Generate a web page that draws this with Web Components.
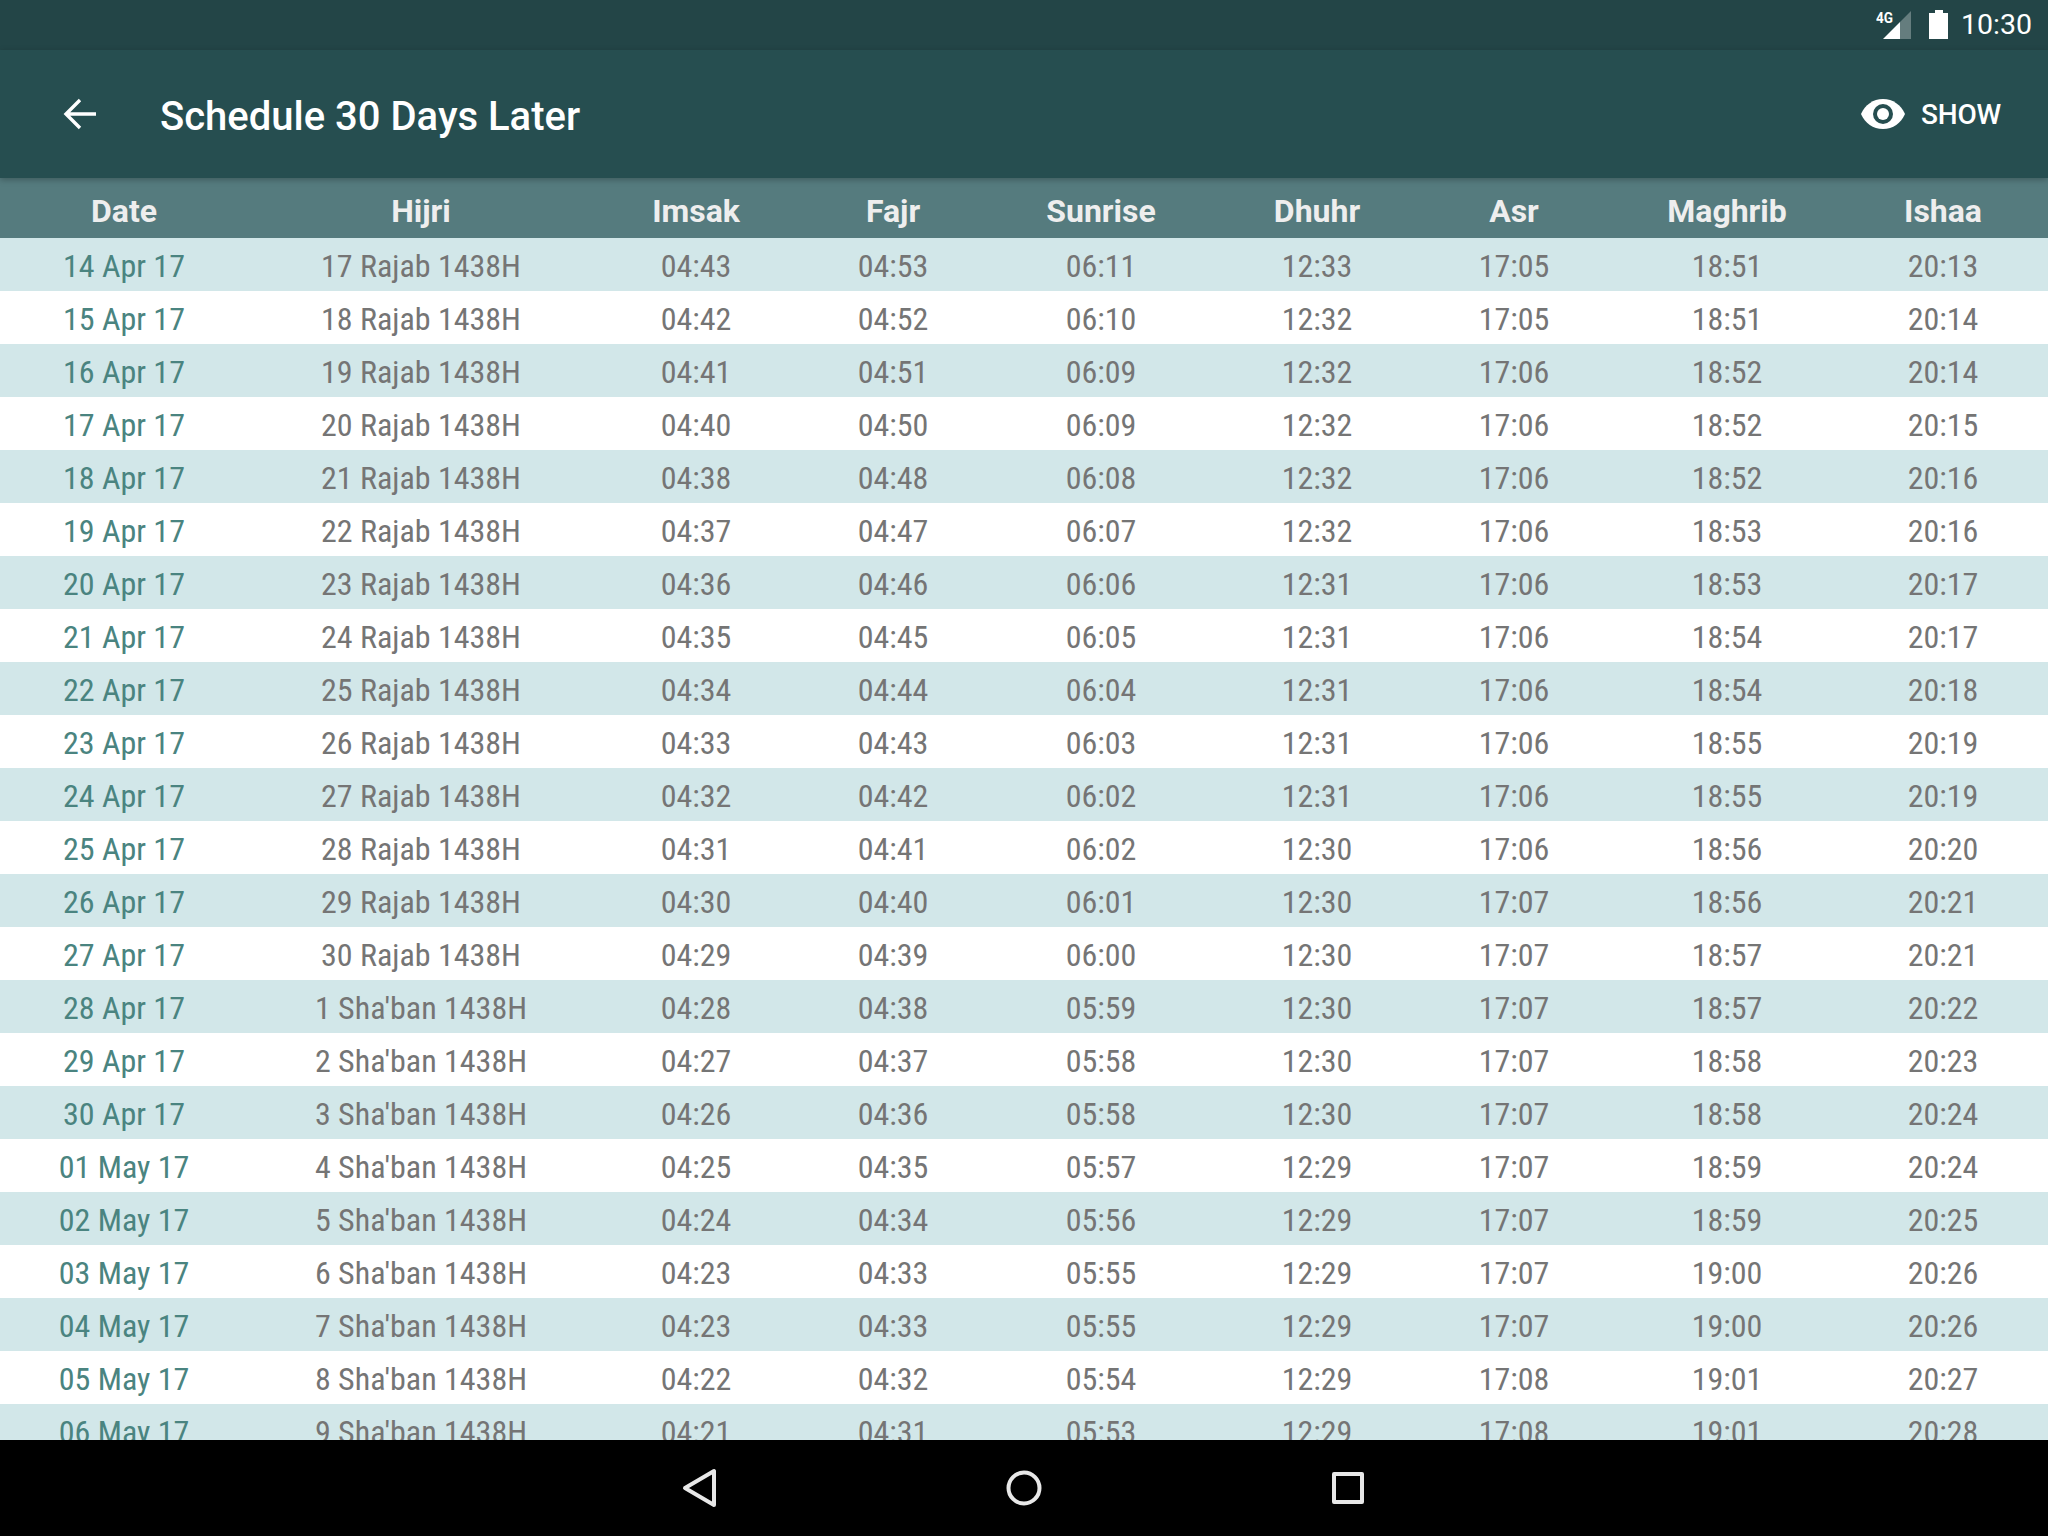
<!DOCTYPE html>
<html><head><meta charset="utf-8"><style>
html,body{margin:0;padding:0;height:100%}
body{width:2048px;height:1536px;overflow:hidden;font-family:Roboto,sans-serif}
x-app{display:flex}
</style></head><body>
<x-app></x-app>
<script>
const DATA=`14 Apr 17|17 Rajab 1438H|04:43|04:53|06:11|12:33|17:05|18:51|20:13
15 Apr 17|18 Rajab 1438H|04:42|04:52|06:10|12:32|17:05|18:51|20:14
16 Apr 17|19 Rajab 1438H|04:41|04:51|06:09|12:32|17:06|18:52|20:14
17 Apr 17|20 Rajab 1438H|04:40|04:50|06:09|12:32|17:06|18:52|20:15
18 Apr 17|21 Rajab 1438H|04:38|04:48|06:08|12:32|17:06|18:52|20:16
19 Apr 17|22 Rajab 1438H|04:37|04:47|06:07|12:32|17:06|18:53|20:16
20 Apr 17|23 Rajab 1438H|04:36|04:46|06:06|12:31|17:06|18:53|20:17
21 Apr 17|24 Rajab 1438H|04:35|04:45|06:05|12:31|17:06|18:54|20:17
22 Apr 17|25 Rajab 1438H|04:34|04:44|06:04|12:31|17:06|18:54|20:18
23 Apr 17|26 Rajab 1438H|04:33|04:43|06:03|12:31|17:06|18:55|20:19
24 Apr 17|27 Rajab 1438H|04:32|04:42|06:02|12:31|17:06|18:55|20:19
25 Apr 17|28 Rajab 1438H|04:31|04:41|06:02|12:30|17:06|18:56|20:20
26 Apr 17|29 Rajab 1438H|04:30|04:40|06:01|12:30|17:07|18:56|20:21
27 Apr 17|30 Rajab 1438H|04:29|04:39|06:00|12:30|17:07|18:57|20:21
28 Apr 17|1 Sha'ban 1438H|04:28|04:38|05:59|12:30|17:07|18:57|20:22
29 Apr 17|2 Sha'ban 1438H|04:27|04:37|05:58|12:30|17:07|18:58|20:23
30 Apr 17|3 Sha'ban 1438H|04:26|04:36|05:58|12:30|17:07|18:58|20:24
01 May 17|4 Sha'ban 1438H|04:25|04:35|05:57|12:29|17:07|18:59|20:24
02 May 17|5 Sha'ban 1438H|04:24|04:34|05:56|12:29|17:07|18:59|20:25
03 May 17|6 Sha'ban 1438H|04:23|04:33|05:55|12:29|17:07|19:00|20:26
04 May 17|7 Sha'ban 1438H|04:23|04:33|05:55|12:29|17:07|19:00|20:26
05 May 17|8 Sha'ban 1438H|04:22|04:32|05:54|12:29|17:08|19:01|20:27
06 May 17|9 Sha'ban 1438H|04:21|04:31|05:53|12:29|17:08|19:01|20:28`.split('\n').map(l=>l.split('|'));
const HEAD=['Date','Hijri','Imsak','Fajr','Sunrise','Dhuhr','Asr','Maghrib','Ishaa'];
const COLS='248px 346px 204px 190px 226px 206px 188px 238px 194px';
function def(name,html,setup){customElements.define(name,class extends HTMLElement{constructor(){super();this.attachShadow({mode:'open'}).innerHTML=html;}connectedCallback(){setup&&setup.call(this)}})}
def('x-status-bar',`<style>:host{display:flex;align-items:center;justify-content:flex-end;height:50px;background:#234547;color:#fff;flex:none;padding-right:16px;box-sizing:border-box}
.sig{width:35px;height:30px;margin-right:18px;display:block}
.b{margin-right:13px;display:block}
.t{font:400 28.500px Roboto,sans-serif;line-height:50px;color:#fff}
</style>
<svg class="sig" width="35" height="30" viewBox="0 0 35 30"><path d="M24 12L35 1V29H24Z" fill="#fff" fill-opacity=".3"/><path d="M24 12V29H7Z" fill="#fff"/><text x="0" y="13" font-family="Roboto" font-weight="700" font-size="15" fill="#fff" textLength="17" lengthAdjust="spacingAndGlyphs">4G</text></svg>
<svg class="b" width="19" height="30" viewBox="0 0 19 30"><path d="M6 0h8v3h5v26H0V3h6z" fill="#fff"/></svg>
<span class="t">10:30</span>`);
def('x-app-bar',`<style>:host{display:flex;align-items:center;height:128px;background:#264e50;color:#fff;flex:none;position:relative;z-index:2;box-shadow:0 2px 6px rgba(0,0,0,.25)}
.back{margin-left:63px;display:block;flex:none}
.title{margin-left:63px;flex:1;font:500 40px Roboto,sans-serif;padding-top:4px}
.eye{display:block;flex:none}
.act{display:flex;align-items:center;gap:16px;margin-right:47px;font:500 28px Roboto,sans-serif;letter-spacing:-.2px}
</style>
<svg class="back" width="34" height="34" viewBox="0 0 34 34"><path d="M33 17H4M17 3L3 17l14 14" fill="none" stroke="#fff" stroke-width="3.400"/></svg>
<span class="title"><slot></slot></span>
<span class="act"><svg class="eye" width="44" height="30" viewBox="0 0 44 30"><path d="M22 0C12 0 4 6 0 15c4 9 12 15 22 15s18-6 22-15C40 6 32 0 22 0Z" fill="#fff"/><circle cx="22" cy="15" r="10" fill="#264e50"/><circle cx="22" cy="15" r="6" fill="#fff"/></svg><slot name="action"></slot></span>`);
def('x-cell',`<style>:host{display:flex;align-items:center;justify-content:center;min-width:0;white-space:nowrap;padding-top:2px}
:host([head]){padding-top:6px}</style><slot></slot>`);
def('x-row',`<style>:host{display:grid;grid-template-columns:${COLS};height:53px;flex:none;font-family:Roboto,sans-serif;font-size:32px;font-stretch:75%;color:#757575;background:#fff;overflow:hidden}
:host([alt]){background:#d2e7e9}
:host([head]){height:60px;background:#557b7e;color:#eee;font-weight:700;font-size:32px;font-stretch:100%}
</style><slot></slot>`);
def('x-table',`<style>:host{display:flex;flex-direction:column;flex:1;min-height:0;overflow:hidden;background:#fff}</style><slot></slot>`,function(){
 if(this.children.length)return;
 const mk=(vals,attrs,dateColor)=>{const r=document.createElement('x-row');attrs.forEach(a=>r.setAttribute(a,''));vals.forEach((v,i)=>{const c=document.createElement('x-cell');if(attrs[0]=='head')c.setAttribute('head','');c.textContent=v;if(i==0&&dateColor)c.style.color=dateColor;r.append(c)});return r};
 this.append(mk(HEAD,['head']));
 DATA.forEach((d,i)=>this.append(mk(d,i%2?[]:['alt'],'#4a8480')));
});
def('x-nav-bar',`<style>:host{display:block;height:96px;background:#000;flex:none}
svg{display:block}</style>
<svg width="2048" height="96" viewBox="0 0 2048 96"><g fill="none" stroke="#e8e8e8" stroke-width="4" stroke-linejoin="round"><path d="M714 31V65L685 48Z"/><circle cx="1024" cy="48" r="15.500"/><rect x="1334" y="34" width="28" height="28"/></g></svg>`);
def('x-app',`<style>:host{display:flex;flex-direction:column;width:2048px;height:1536px}</style>
<x-status-bar></x-status-bar>
<x-app-bar>Schedule 30 Days Later<span slot="action">SHOW</span></x-app-bar>
<x-table></x-table>
<x-nav-bar></x-nav-bar>`);
</script>
</body></html>
